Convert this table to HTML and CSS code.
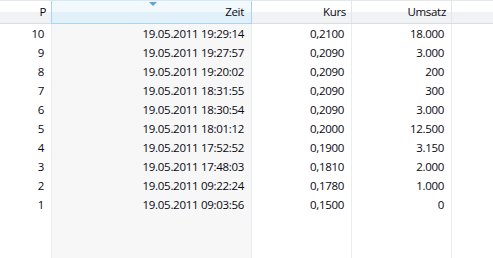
FILE: index.html
```html
<!DOCTYPE html>
<html lang="de">
<head>
<meta charset="utf-8">
<title>Umsätze</title>
<link rel="stylesheet" href="styles.css">
</head>
<body>
<div class="grid">
  <div class="col col-p">
    <div class="head">P</div>
    <div class="cell">10</div><div class="cell">9</div><div class="cell">8</div><div class="cell">7</div><div class="cell">6</div>
    <div class="cell">5</div><div class="cell">4</div><div class="cell">3</div><div class="cell">2</div><div class="cell">1</div>
  </div>
  <div class="col col-zeit sorted">
    <div class="head"><span class="arrow"></span>Zeit</div>
    <div class="cell">19.05.2011 19:29:14</div>
    <div class="cell">19.05.2011 19:27:57</div>
    <div class="cell">19.05.2011 19:20:02</div>
    <div class="cell">19.05.2011 18:31:55</div>
    <div class="cell">19.05.2011 18:30:54</div>
    <div class="cell">19.05.2011 18:01:12</div>
    <div class="cell">19.05.2011 17:52:52</div>
    <div class="cell">19.05.2011 17:48:03</div>
    <div class="cell">19.05.2011 09:22:24</div>
    <div class="cell">19.05.2011 09:03:56</div>
  </div>
  <div class="col col-kurs">
    <div class="head">Kurs</div>
    <div class="cell">0,2100</div><div class="cell">0,2090</div><div class="cell">0,2090</div><div class="cell">0,2090</div><div class="cell">0,2090</div>
    <div class="cell">0,2000</div><div class="cell">0,1900</div><div class="cell">0,1810</div><div class="cell">0,1780</div><div class="cell">0,1500</div>
  </div>
  <div class="col col-umsatz">
    <div class="head">Umsatz</div>
    <div class="cell">18.000</div><div class="cell">3.000</div><div class="cell">200</div><div class="cell">300</div><div class="cell">3.000</div>
    <div class="cell">12.500</div><div class="cell">3.150</div><div class="cell">2.000</div><div class="cell">1.000</div><div class="cell">0</div>
  </div>
  <div class="col col-rest">
    <div class="head"></div>
  </div>
</div>
</body>
</html>
```

FILE: styles.css
```css
html, body {
  margin: 0;
  padding: 0;
  height: 100%;
  background: #ffffff;
}

.grid {
  display: grid;
  grid-template-columns: 52px 200px 100px 100px 1fr;
  height: 258px;
  font-family: "Open Sans", "Noto Sans", sans-serif;
  font-size: 11.5px;
  letter-spacing: -0.3px;
  color: #080812;
  overflow: hidden;
}

.col {
  display: flex;
  flex-direction: column;
  border-right: 1px solid #e9edf2;
}

.col-rest {
  border-right: 0;
}

.col-zeit {
  background: #f7f7f7;
}

.head {
  position: relative;
  height: 22px;
  line-height: 22px;
  padding-right: 6px;
  text-align: right;
  border-top: 1px solid #e4e8ed;
  border-bottom: 1px solid #d9dde2;
  background: linear-gradient(#ffffff 0, #ffffff 11px, #f1f2f4 11px, #f1f2f4 100%);
  box-shadow: inset -1px 0 0 #e3e6ea;
  margin-right: -1px;
}

.col-rest .head {
  margin-right: 0;
  box-shadow: none;
}

.sorted .head {
  background: linear-gradient(#f2f9fc 0, #f2f9fc 11px, #e1f0f9 11px, #e1f0f9 100%);
  border-top-color: #d8e9f5;
  border-bottom-color: #a9d6f0;
  box-shadow: inset -1px 0 0 #a4d6f2, inset 1px 0 0 #a4d6f2;
  margin-left: -1px;
  padding-right: 8px;
}

.arrow {
  position: absolute;
  top: 1px;
  left: 50%;
  margin-left: -3px;
  width: 0;
  height: 0;
  border-left: 4px solid transparent;
  border-right: 4px solid transparent;
  border-top: 4px solid #5fa3d3;
}

.cell {
  height: 19px;
  line-height: 19px;
  padding-right: 7px;
  text-align: right;
  white-space: nowrap;
}
```
